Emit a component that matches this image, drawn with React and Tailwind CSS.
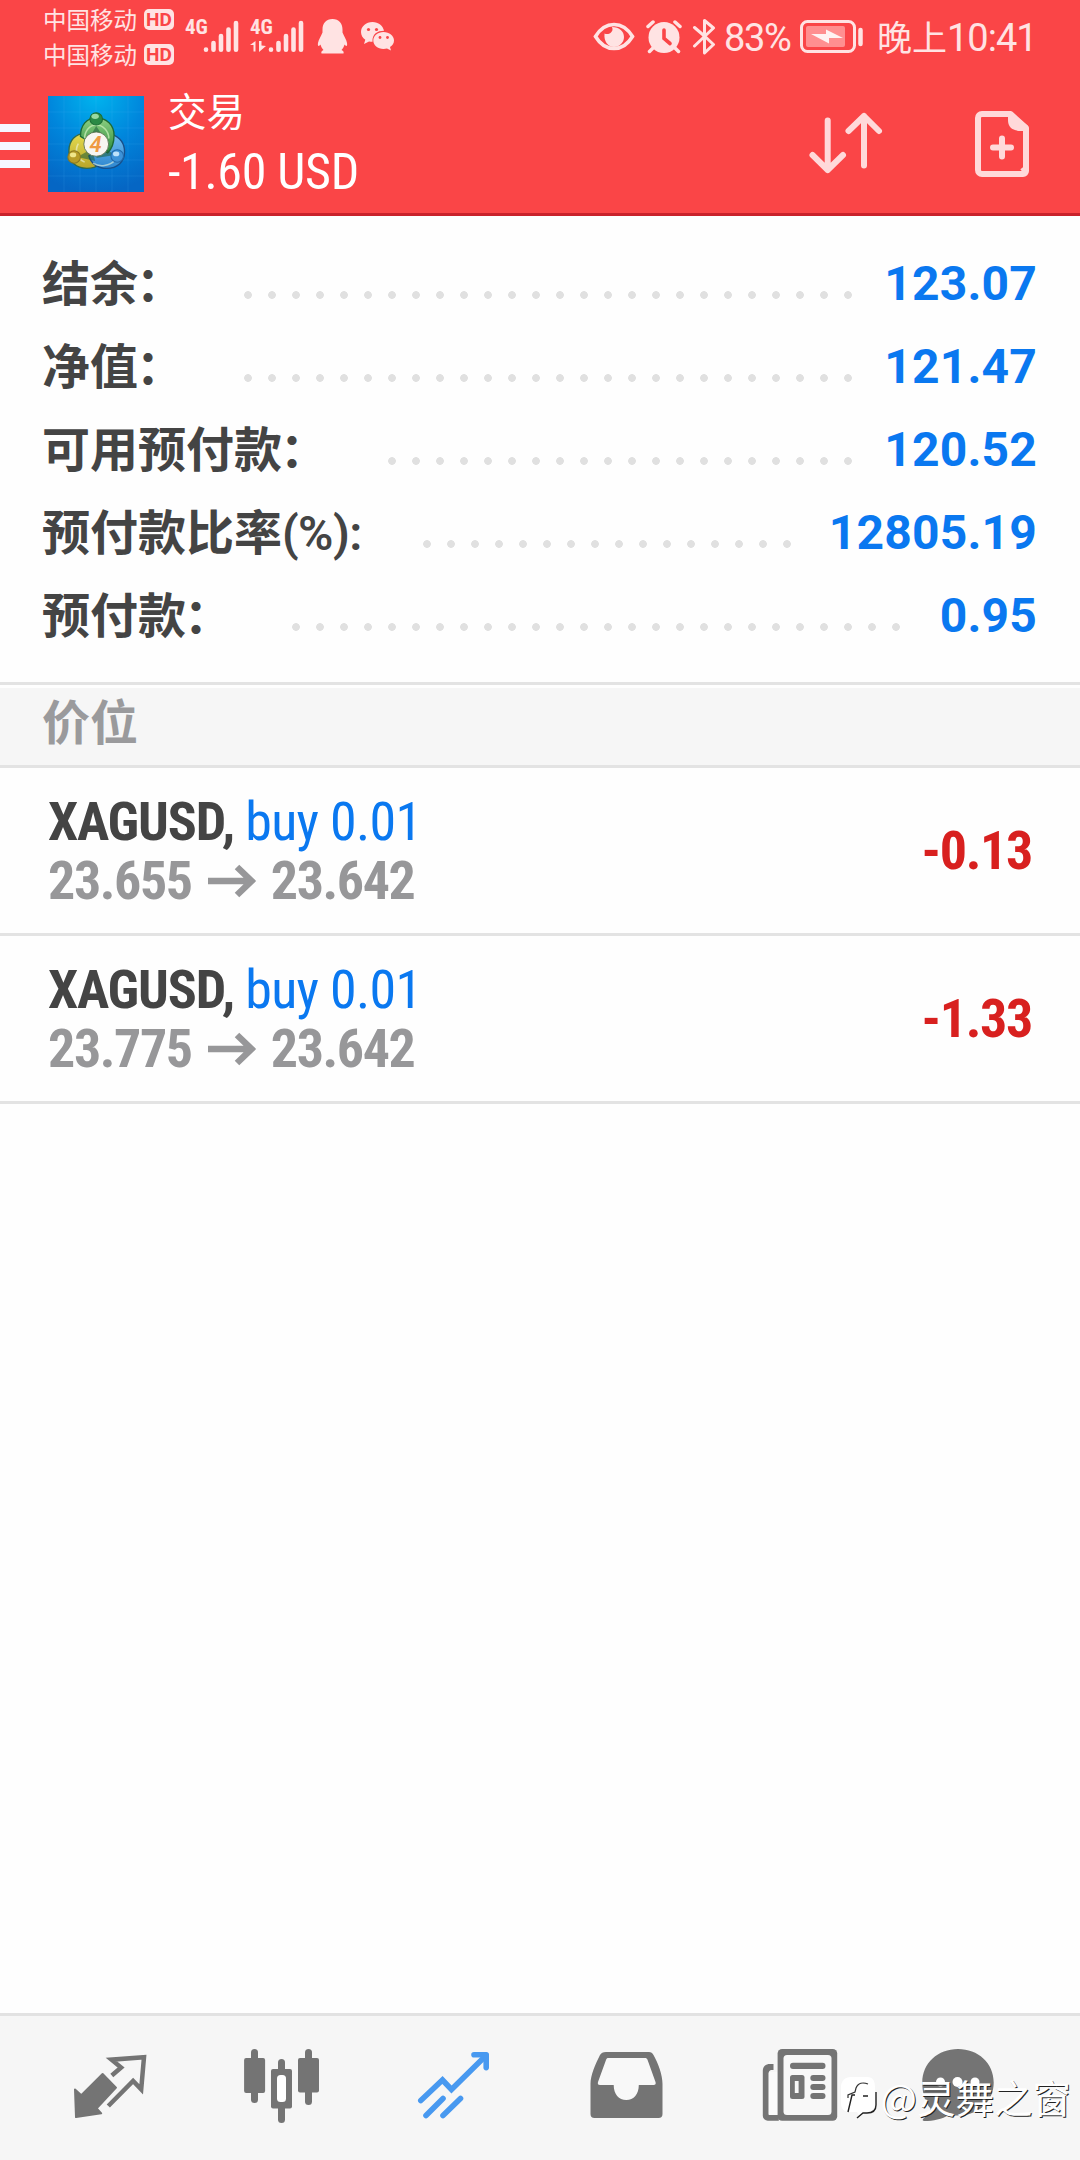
import React from 'react';

const balances = [
  { label: '结余', colon: '：', value: '123.07', dots: 'w-[624px]', box: 'w-[177px]' },
  { label: '净值', colon: '：', value: '121.47', dots: 'w-[624px]', box: 'w-[177px]' },
  { label: '可用预付款', colon: '：', value: '120.52', dots: 'w-[480px]', box: 'w-[177px]' },
  { label: '预付款比率', colon: '(%):', latin: true, value: '12805.19', dots: 'w-[384px]', box: 'w-[238px]' },
  { label: '预付款', colon: '：', value: '0.95', dots: 'w-[624px]', box: 'w-[129px]' },
];

const positions = [
  { id: 1, symbol: 'XAGUSD', side: 'buy 0.01', open: '23.655', now: '23.642', profit: '-0.13' },
  { id: 2, symbol: 'XAGUSD', side: 'buy 0.01', open: '23.775', now: '23.642', profit: '-1.33' },
];

function Carrier() {
  return (
    <div className="flex items-center h-[35px]">
      <span className="text-[23.5px] leading-none w-[101px] whitespace-nowrap">中国移动</span>
      <span className="w-[30px] h-[21px] rounded-[5px] bg-[#ffe3e3] text-[#fa4547] font-['Roboto'] font-bold text-[19px] leading-[21px] text-center">HD</span>
    </div>
  );
}

function Signal({ data }) {
  return (
    <div className="relative w-[54px] h-[36px]">
      <span className="absolute left-0 top-0 font-['Roboto'] font-bold font-stretch-75% text-[21px] leading-[16px]">4G</span>
      <svg className="absolute inset-0" width="54" height="36" viewBox="0 0 54 36" stroke="#ffe3e3" strokeWidth="4.6" strokeLinecap="round">
        <path d="M21 30.6v.2M28.5 24v6.800M36 17v13.800M43.500 10.500v20.300M51 4v26.800" />
        {data && (
          <path d="M0 26l5.500-4v10.500h-2V26zM9 22h2.500v4.500l4.500.5-7 6z" fill="#ffe3e3" stroke="none" />
        )}
      </svg>
    </div>
  );
}

function StatusBar() {
  return (
    <div className="h-[75px] flex items-start text-[#ffe3e3]">
      <div className="pl-[43px] pt-[2px] w-[186px]">
        <Carrier />
        <Carrier />
      </div>
      <div className="flex pt-[19px] gap-[11px] -ml-[1px] mr-[12px] shrink-0 w-[120px]">
        <Signal />
        <Signal data />
      </div>
      <svg className="mt-[18px] shrink-0" width="31" height="37" viewBox="0 0 31 37" fill="#ffe3e3">
        <path d="M15.500 1C9 1 5.500 5.500 5.500 11.500v3C4 18 1.500 22 1 25c-.5 3 .5 4 2.500 1.500.5 2 1.500 4 3 5.500-2 .8-2.500 2-2 3.500h22c.5-1.500 0-2.700-2-3.500 1.500-1.500 2.500-3.500 3-5.500 2 2.500 3 1.500 2.500-1.500-.5-3-3-7-4.500-10.500v-3C25.500 5.500 22 1 15.500 1z" />
      </svg>
      <svg className="mt-[21px] ml-[12px] shrink-0" width="35" height="31" viewBox="0 0 35 31" fill="#ffe3e3">
        <path d="M12.500 1C6 1 1 5.500 1 11c0 3.200 1.700 6 4.300 7.800L4 23l5-2.600c1.100.3 2.300.4 3.500.4C12 13 17.500 9.800 24 9.800 23 4.600 18.500 1 12.500 1z" />
        <path d="M23.500 11C17.700 11 13.300 14.800 13.300 19.500S17.700 28 23.500 28c1.200 0 2.400-.2 3.500-.5l4 2-1-3.400c2.500-1.600 4-4 4-6.600C34 14.800 29.300 11 23.500 11z" />
        <circle cx="8.500" cy="8.500" r="1.600" fill="#fa4547" />
        <circle cx="16.500" cy="8.500" r="1.600" fill="#fa4547" />
        <circle cx="20" cy="16.500" r="1.400" fill="#fa4547" />
        <circle cx="27.500" cy="16.500" r="1.400" fill="#fa4547" />
      </svg>

      <svg className="ml-[198px] mt-[22px] shrink-0" width="42" height="29" viewBox="0 0 42 29">
        <path d="M2.500 14.500C7 7 13 2.500 21 2.500S35 7 39.500 14.500C35 22 29 26.500 21 26.500S7 22 2.500 14.500z" fill="none" stroke="#ffe3e3" strokeWidth="3.600" />
        <path d="M19 5c1 2.500.5 4-1 5.500-2 1.800-4.500 2-6.500 1-.8 8 3.500 13.500 9.500 13.500 5.500 0 10-4.500 10-10S26.500 5 19 5z" fill="#ffe3e3" />
      </svg>
      <svg className="ml-[11px] mt-[20px] shrink-0" width="36" height="34" viewBox="0 0 36 34" fill="none" stroke="#ffe3e3" strokeLinecap="round">
        <circle cx="18" cy="17.500" r="15.500" fill="#ffe3e3" stroke="none" />
        <path d="M2 6.500l5-4.500M34 6.500L29 2M7 28l-3.500 3.500M29 28l3.500 3.500" strokeWidth="3.500" />
        <path d="M18 10v8.500l6 5" stroke="#fa4547" strokeWidth="3.600" />
      </svg>
      <svg className="ml-[10px] mt-[18px] shrink-0" width="24" height="37" viewBox="0 0 24 37" fill="none" stroke="#ffe3e3" strokeWidth="3" strokeLinecap="round" strokeLinejoin="round">
        <path d="M2.500 9.500L13 18.500l8.500 8L12.500 35V21.500M2.500 28L21.500 10l-9-7.500v13" />
      </svg>
      <span className="ml-[8px] mt-[18px] text-[38px] leading-[40px] w-[76px] tracking-[-1.300px] font-['Roboto'] whitespace-nowrap">83%</span>
      <svg className="mt-[20px] shrink-0" width="64" height="33" viewBox="0 0 64 33">
        <rect x="1.500" y="1.500" width="53" height="30" rx="6" fill="none" stroke="#ffe3e3" strokeWidth="3" />
        <rect x="6" y="6" width="39" height="21" rx="2" fill="#ff8f90" />
        <path d="M11 14l18 9.500v-5.500h14L26 9.500V14z" fill="#fff3f3" />
        <path d="M60.500 10v14" stroke="#ffe3e3" strokeWidth="4.500" strokeLinecap="round" />
      </svg>
      <span className="ml-[13px] mt-[16px] flex text-[35px] leading-[40px] whitespace-nowrap">
        <span>晚上</span>
        <span className="font-['Roboto'] text-[38px] leading-[44px] tracking-[-1px]">10:41</span>
      </span>
    </div>
  );
}

function AppIcon() {
  return (
    <svg className="shrink-0" width="96" height="96" viewBox="0 0 96 96">
      <defs>
        <radialGradient id="bg" cx="0.5" cy="0" r="1">
          <stop offset="0" stopColor="#00b4ee" />
          <stop offset="0.5" stopColor="#0086dc" />
          <stop offset="1" stopColor="#0566c4" />
        </radialGradient>
        <linearGradient id="green" x1="0" y1="0" x2="0" y2="1">
          <stop offset="0" stopColor="#8fd083" />
          <stop offset="1" stopColor="#2b8b3b" />
        </linearGradient>
        <linearGradient id="yellow" x1="0" y1="0" x2="0" y2="1">
          <stop offset="0" stopColor="#e4dc50" />
          <stop offset="1" stopColor="#b9a52a" />
        </linearGradient>
        <linearGradient id="blue" x1="0" y1="0" x2="0" y2="1">
          <stop offset="0" stopColor="#6fbdf0" />
          <stop offset="1" stopColor="#2d86cf" />
        </linearGradient>
      </defs>
      <rect width="96" height="96" fill="url(#bg)" />
      <path d="M16 0v96M32 0v96M48 0v96M64 0v96M80 0v96M0 16h96M0 32h96M0 48h96M0 64h96M0 80h96" stroke="#5cc4f5" strokeOpacity=".13" />
      <g transform="translate(-2.200 -.8) scale(1.05 1.030)">
        <path d="M38 37C28 37 22 44 22 54c0 11 7 17 17 17 5 0 9-1 12-4z" fill="url(#yellow)" stroke="#2f6a4f" strokeWidth="1.300" />
        <path d="M63 38c8 3 12 9 12 17 0 10-7 16-17 16-9 0-15-5-17-12z" fill="url(#blue)" stroke="#184f8a" strokeWidth="1.300" />
        <path d="M48 22c10 0 17 7 17 17 0 7-2 13-6 17L33 40c0-11 6-18 15-18z" fill="url(#green)" stroke="#1d6a35" strokeWidth="1.300" />
        <path d="M37 42c0-8 5-13 11-13s12 5 12 13" fill="none" stroke="#c3ebb3" strokeOpacity=".8" strokeWidth="1.500" />
        <path d="M31 47c-3 5-3 14 6 18M45 66c6 4 16 3 21-3" fill="none" stroke="#eef7dc" strokeOpacity=".6" strokeWidth="1.500" />
        <path d="M48 30l-8 14h17zM30 60l14-8 3 12zM66 58L54 50l-6 11z" fill="#1d5c38" fillOpacity=".55" />
        <circle cx="48" cy="23" r="6" fill="#2b8a45" stroke="#1c6c34" />
        <ellipse cx="47" cy="20.500" rx="3.500" ry="2.500" fill="#9ad9a0" />
        <circle cx="27" cy="60" r="6" fill="#b79c28" stroke="#8a7720" />
        <ellipse cx="26" cy="58" rx="3" ry="2.300" fill="#f0e68a" />
        <circle cx="68" cy="59" r="6" fill="#3d92d8" stroke="#1f68ab" />
        <ellipse cx="67" cy="57" rx="3" ry="2.300" fill="#bfe2fa" />
        <circle cx="48" cy="47.500" r="11.800" fill="#f8f6f1" stroke="#536b49" strokeWidth=".8" />
        <text x="47.500" y="55" textAnchor="middle" fontFamily="Roboto" fontWeight="600" fontStyle="italic" fontSize="21" fill="#ef9a42">4</text>
      </g>
    </svg>
  );
}

function Header() {
  return (
    <div className="h-[141px] flex items-start border-b-[3px] border-[#c9222b]">
      <div className="mt-[49px] flex flex-col gap-[10px] w-[30px]">
        <span className="h-[8px] bg-[#f6f6ff]" />
        <span className="h-[8px] bg-[#f6f6ff]" />
        <span className="h-[8px] bg-[#f6f6ff]" />
      </div>
      <div className="ml-[18px] mt-[21px]">
        <AppIcon />
      </div>
      <div className="ml-[24px] mt-[13px] text-white whitespace-nowrap">
        <div className="text-[38.500px] leading-[42px]">交易</div>
        <div className="mt-[12px] font-['Roboto'] font-stretch-75% text-[50px] leading-[60px] tracking-[-0.300px]">-1.60 USD</div>
      </div>
      <svg className="ml-auto mt-[33px]" width="78" height="72" viewBox="0 0 78 72" fill="none" stroke="#ffd9da" strokeWidth="6" strokeLinecap="round" strokeLinejoin="round">
        <path d="M21.700 12.500V62M6.500 47l15.200 15L37 47" />
        <path d="M58 57.500V8M42.500 23L58 8l15 15" />
      </svg>
      <svg className="ml-[88px] mr-[48px] mt-[33px]" width="60" height="72" viewBox="0 0 60 72" fill="none" stroke="#ffd9da">
        <path d="M10 6h28.500L54 20v43a3 3 0 0 1-3 3H10a4 4 0 0 1-4-4V10a4 4 0 0 1 4-4z" strokeWidth="6" strokeLinejoin="round" />
        <path d="M36 5v7c0 7 4.500 11 13 11h7v-5L40 5z" fill="#ffd9da" stroke="none" />
        <path d="M50 60l3 4" strokeWidth="4" />
        <path d="M30 30.500v18M21 39.500h18" strokeWidth="6" strokeLinecap="round" />
      </svg>
    </div>
  );
}

function NavBar() {
  return (
    <div className="h-[147px] border-t-[3px] border-[#e2e2e2] bg-[#f6f6f6] flex pt-[32px] pl-[74px] gap-[100px] relative">
      <svg className="shrink-0 overflow-visible" width="72" height="76" viewBox="2 0 72 76">
        <path d="M3 41.500l6.300 5.800L30.600 26 44 39.600 24.700 60.300l4.500 5L4 69z" fill="#747474" stroke="#747474" strokeWidth="2" strokeLinejoin="round" />
        <path d="M39.800 27.500l9.300-8-9.600-7.800L72 9.300l-2.800 32-8.100-8.300L36.300 58" fill="none" stroke="#747474" strokeWidth="4.500" />
      </svg>
      <svg className="shrink-0 overflow-visible" width="72" height="76" viewBox="246 48 72 76" fill="#747474">
        <rect x="244.100" y="58" width="21" height="35" rx="2" />
        <rect x="251" y="49" width="7" height="54" rx="3.500" />
        <rect x="271" y="69" width="21" height="39.500" rx="2" />
        <rect x="278" y="59" width="7" height="64" rx="3.500" />
        <rect x="277" y="75" width="9" height="27" rx="3.500" fill="#fff" />
        <rect x="298" y="58" width="21" height="34.500" rx="2" />
        <rect x="305" y="49" width="7" height="56" rx="3.500" />
      </svg>
      <svg className="shrink-0 overflow-visible" width="72" height="76" viewBox="418 48 72 76" fill="none" stroke="#4899f0" strokeWidth="5.600" strokeLinecap="round">
        <path d="M420.800 100.500l21.700-20.500 9 9.500 34.500-34" strokeLinejoin="miter" />
        <path d="M474 54.800h12.200v12.800" strokeLinejoin="round" />
        <path d="M426 115.500l17-17M443 115.500l17.500-17" />
      </svg>
      <svg className="shrink-0 overflow-visible" width="72" height="76" viewBox="590 48 72 76">
        <path d="M606 52h43c2 0 3.500 1 4.500 3 5 9 9 20 9 29v30a4 4 0 0 1-4 4h-64a4 4 0 0 1-4-4V84c0-9 5-20 9.500-29 1.200-2 3-3 6-3z" fill="#747474" />
        <path d="M608.500 58h36.500c1.300 0 2 .6 2.500 1.800L655.500 82c.6 1.800 0 3-2 3h-14.700c0 9-5 15-12.500 15s-12.600-6-12.600-15H600c-2 0-2.500-1.200-2-3l8-22c.6-1.400 1-2 2.500-2z" fill="#f8f8f8" />
      </svg>
      <svg className="shrink-0 overflow-visible" width="72" height="76" viewBox="762 48 72 76" fill="#747474">
        <path d="M773.500 64v6h-2a3 3 0 0 0-2.700 3v42h10v5.700H768a5 5 0 0 1-5.200-5V71c0-4.500 3-7 7-7z" />
        <rect x="768.600" y="72" width="9" height="43" rx="1" fill="#fafafa" />
        <rect x="777.600" y="49" width="59.600" height="71.700" rx="4.500" />
        <rect x="783.500" y="55" width="48" height="60" rx="3.500" fill="#f8f8f8" />
        <rect x="790" y="62.700" width="35.500" height="6.300" rx="3" />
        <rect x="790" y="75" width="14.500" height="24" rx="2.500" />
        <rect x="794.800" y="81" width="3.800" height="12" fill="#f8f8f8" />
        <rect x="810.300" y="75" width="15.200" height="6" rx="3" />
        <rect x="810.300" y="84" width="15.200" height="6" rx="3" />
        <rect x="810.300" y="93" width="15.200" height="6" rx="3" />
      </svg>
      <svg className="shrink-0 overflow-visible -ml-3" width="72" height="76" viewBox="922 48 72 76">
        <path d="M958 49c20 0 35.700 14 35.700 33.500S978 115.500 958 115.500c-3 0-6-.3-8.500-.8-8 4.600-16 6.300-25 6.300-2 0-2.500-1.300-1-2.500 4-3 6-6 7-10-5-6-8.200-14-8.200-26C922.300 63 938 49 958 49z" fill="#747474" />
        <circle cx="940.500" cy="82" r="4.500" fill="#fff" />
        <circle cx="957.500" cy="82" r="5" fill="#fff" />
        <circle cx="975" cy="82" r="4.500" fill="#fff" />
      </svg>

      {/* author mark over the tab bar */}
      <div className="absolute right-[9px] top-[54px] flex items-center text-white whitespace-nowrap">
        <svg width="40" height="46" viewBox="0 0 40 46" className="mr-[2px] mt-[6px]">
          <path d="M12 1h16c6 0 8 4 8 10v16c0 6-3 8.500-8 9l-7 5-3-5h-7c-6 0-9-3-9-9V11C2 5 6 1 12 1z" fill="#fff" />
          <path d="M29 8c-5-2-10-1-12 4l-1 4-7 3v3" fill="none" stroke="#333" strokeWidth="1.200" />
          <path d="M16 19h-3l-4 17M24 20h5M37 16v13c0 5-3 8-9 8h-4l-6 5" fill="none" stroke="#222" strokeWidth="1.400" />
        </svg>
        <span className="text-[38.500px] leading-[44px] font-normal [text-shadow:1px_1px_0_#222]">@灵舞之窗</span>
      </div>
    </div>
  );
}

export default function App() {
  return (
    <div className="w-[1080px] h-[2160px] bg-white flex flex-col overflow-hidden font-['Noto_Sans_CJK_SC',sans-serif]">
      <div className="bg-[#fa4547]">
        <StatusBar />
        <Header />
      </div>

      <div className="flex-1 bg-[#fefefe]">
        <div className="h-[469px] pt-[27px] border-b-[3px] border-[#e3e3e3]">
          {balances.map((row) => (
            <div key={row.label} className="h-[83px] flex items-center pl-[42px] pr-[43px]">
              <span className="text-[48px] leading-[75px] h-[83px] font-bold text-[#444] whitespace-nowrap w-0">
                {row.label}
                <span className={row.latin ? "font-['Roboto'] font-semibold tracking-[-0.600px]" : '-ml-[2px]'}>{row.colon}</span>
              </span>
              <span className={`ml-auto mt-[21px] h-[24px] bg-[radial-gradient(circle,#e0e0e0_3.5px,transparent_4.2px)] bg-[length:24px_24px] ${row.dots}`} />
              <span className={`-mt-[2px] text-right font-['Roboto'] font-bold text-[48px] tracking-[0.200px] text-[#0a78f0] ${row.box}`}>{row.value}</span>
            </div>
          ))}
        </div>

        <div className="h-[83px] mt-[3px] -mb-[3px] bg-[#f6f6f6]">
          <div className="text-[48px] leading-[62px] h-[80px] pl-[42px] font-bold text-[#9a9a9c] border-b-[3px] border-[#e3e3e3]">价位</div>
        </div>

        {positions.map((p) => (
          <div key={p.id} className="h-[168px] flex items-center justify-between pl-[48px] pr-[48px] bg-[#fefefe] border-b-[3px] border-[#e3e3e3] font-['Roboto'] font-stretch-75% text-[54px] leading-[59px]">
            <div className="whitespace-nowrap">
              <div className="font-bold text-[#444] tracking-[-1.150px]">
                {p.symbol}, <span className="font-normal text-[#0a78f0] tracking-[-0.700px]">{p.side}</span>
              </div>
              <div className="font-bold text-[#979799] flex items-center tracking-[-1.400px]">
                <span>{p.open}</span>
                <svg className="ml-[15px] mr-[14px]" width="50" height="36" viewBox="0 0 50 36" fill="none" stroke="#979799" strokeWidth="6.500">
                  <path d="M1 19h44M30 5l14.500 14L30 33" />
                </svg>
                <span>{p.now}</span>
              </div>
            </div>
            <span className="font-bold text-[#d8201f] tracking-[-1.300px]">{p.profit}</span>
          </div>
        ))}
      </div>

      <NavBar />
    </div>
  );
}
